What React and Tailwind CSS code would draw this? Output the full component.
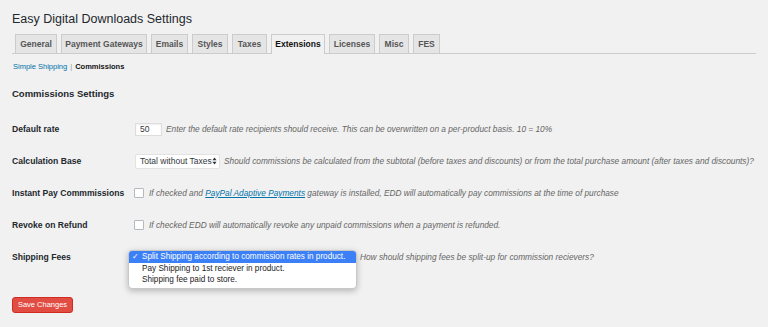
import React from 'react';

const tabs = [
  { name: 'General', w: 'w-[42px]' },
  { name: 'Payment Gateways', w: 'w-[86px]' },
  { name: 'Emails', w: 'w-[37px]' },
  { name: 'Styles', w: 'w-[36px]' },
  { name: 'Taxes', w: 'w-[35px]' },
  { name: 'Extensions', w: 'w-[54px]', active: true },
  { name: 'Licenses', w: 'w-[46px]' },
  { name: 'Misc', w: 'w-[30px]' },
  { name: 'FES', w: 'w-[27px]' },
];

const Row = ({ label, children }) => (
  <div className="flex h-[32px] items-center">
    <div className="w-[123px] shrink-0 text-[8.6px] font-bold text-[#23282d]">{label}</div>
    <div className="flex items-center">{children}</div>
  </div>
);

const Desc = ({ children, className = '' }) => (
  <span className={`whitespace-nowrap text-[8.3px] italic text-[#666] ${className}`}>{children}</span>
);

const Checkbox = () => (
  <span className="-ml-px inline-block h-[10px] w-[10px] shrink-0 rounded-[1px] border border-[#b4b9be] bg-white" />
);

export default function App() {
  return (
    <div className="min-h-[327px] w-[768px] overflow-hidden bg-[#f1f1f1] px-[12px] font-['Liberation_Sans',Arial,sans-serif] text-[#444]">
      <h1 className="pt-[9px] text-[12.5px] leading-[20px] text-[#23282d]">Easy Digital Downloads Settings</h1>

      {/* onglets */}
      <nav className="mt-[5px] flex h-[20px] gap-[4px] border-b border-[#ccc] pl-[3px]">
        {tabs.map((t) => (
          <div
            key={t.name}
            className={`${t.w} flex shrink-0 items-center justify-center border border-b-0 border-[#ccc] text-[8.5px] font-bold ${
              t.active ? 'h-[20px] bg-[#f1f1f1] text-[#111]' : 'h-[19px] bg-[#e5e5e5] text-[#555]'
            }`}
          >
            {t.name}
          </div>
        ))}
      </nav>

      <div className="mt-[7px] flex h-[12px] items-center pl-px text-[7.5px]">
        <a className="text-[#0073aa]">Simple Shipping</a>
        <span className="mx-[3px] text-[#999]">|</span>
        <span className="font-bold text-[#111]">Commissions</span>
      </div>

      <h2 className="mt-[14px] text-[9.5px] font-bold leading-[14px] text-[#23282d]">Commissions Settings</h2>

      <div className="mt-[12px]">
        <Row label="Default rate">
          <input
            readOnly
            defaultValue="50"
            className="h-[13px] w-[27px] border border-[#ddd] bg-white pl-[4px] text-[8.5px] text-[#32373c] shadow-[inset_0_1px_2px_rgba(0,0,0,0.07)] outline-none"
          />
          <Desc className="ml-[4px]">Enter the default rate recipients should receive. This can be overwritten on a per-product basis. 10 = 10%</Desc>
        </Row>

        <Row label="Calculation Base">
          <div className="flex h-[15px] w-[85px] items-center justify-between rounded-[2px] border border-[#e2e2e2] bg-white pl-[4px] pr-[2px] text-[8.5px] text-[#32373c]">
            <span>Total without Taxes</span>
            <svg width="5" height="8" viewBox="0 0 5 8">
              <path d="M2.5 0.5 L4.6 3.2 H0.4 Z M2.5 7.5 L4.6 4.8 H0.4 Z" fill="#333" />
            </svg>
          </div>
          <Desc className="ml-[4px]">
            Should commissions be calculated from the subtotal (before taxes and discounts) or from the total purchase amount (after taxes and discounts)?
          </Desc>
        </Row>

        <Row label="Instant Pay Commmissions">
          <Checkbox />
          <Desc className="ml-[5px]">
            If checked and <a className="text-[#0073aa] underline">PayPal Adaptive Payments</a> gateway is installed, EDD will automatically pay commissions at the time of purchase
          </Desc>
        </Row>

        <Row label="Revoke on Refund">
          <Checkbox />
          <Desc className="ml-[5px]">If checked EDD will automatically revoke any unpaid commissions when a payment is refunded.</Desc>
        </Row>

        <Row label="Shipping Fees">
          <div className="relative -ml-[7px] h-[15px] w-[229px]">
            <div className="absolute left-0 top-0 w-full overflow-hidden rounded-[4px] border border-[#c8c8c8] bg-white pb-[3px] text-[8.2px] leading-[11px] text-[#222] shadow-[0_2px_6px_rgba(0,0,0,0.25)]">
              <div className="relative h-[12px] bg-[#3b80f6] pl-[13px] leading-[12px] text-white">
                <span className="absolute left-[3px]">✓</span>
                Split Shipping according to commission rates in product.
              </div>
              <div className="pl-[13px]">Pay Shipping to 1st reciever in product.</div>
              <div className="pl-[13px]">Shipping fee paid to store.</div>
            </div>
          </div>
          <Desc className="ml-[3px]">How should shipping fees be split-up for commission recievers?</Desc>
        </Row>
      </div>

      <button className="mt-[24px] flex h-[16px] w-[61px] items-center justify-center rounded-[3px] border border-[#d02c21] bg-[#e14d43] text-[7.5px] text-white">
        Save Changes
      </button>
    </div>
  );
}
